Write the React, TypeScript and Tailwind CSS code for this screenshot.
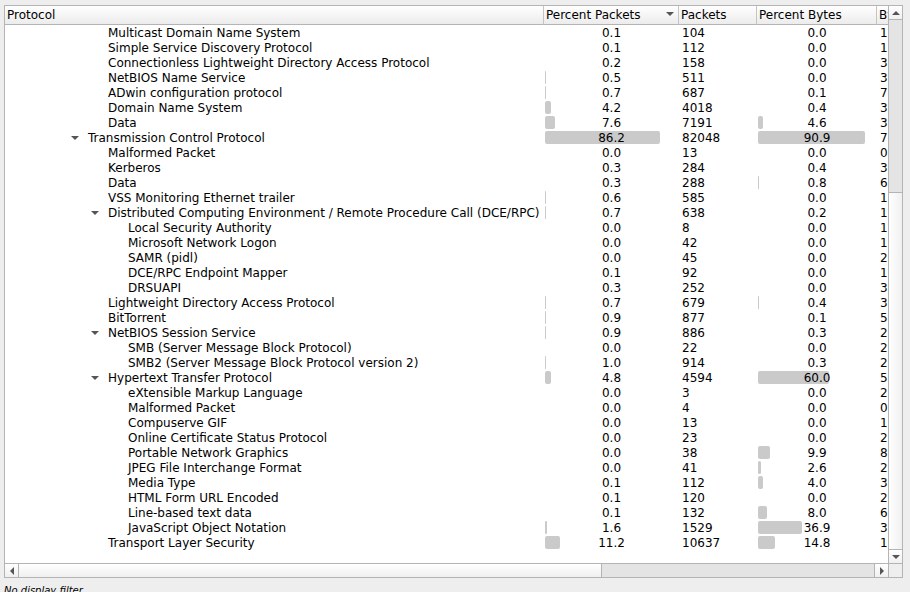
import React from "react";

type Row = {
  depth: number;
  open?: boolean;
  name: string;
  pctPackets: number;
  packets: number;
  pctBytes: number;
  bytes: string;
};

const r = (
  depth: number,
  name: string,
  pctPackets: number,
  packets: number,
  pctBytes: number,
  bytes: string,
  open = false,
): Row => ({ depth, name, pctPackets, packets, pctBytes, bytes, open });

const rows: Row[] = [
  r(1, "Multicast Domain Name System", 0.1, 104, 0, "1"),
  r(1, "Simple Service Discovery Protocol", 0.1, 112, 0, "1"),
  r(1, "Connectionless Lightweight Directory Access Protocol", 0.2, 158, 0, "3"),
  r(1, "NetBIOS Name Service", 0.5, 511, 0, "3"),
  r(1, "ADwin configuration protocol", 0.7, 687, 0.1, "7"),
  r(1, "Domain Name System", 4.2, 4018, 0.4, "3"),
  r(1, "Data", 7.6, 7191, 4.6, "3"),
  r(0, "Transmission Control Protocol", 86.2, 82048, 90.9, "7", true),
  r(1, "Malformed Packet", 0, 13, 0, "0"),
  r(1, "Kerberos", 0.3, 284, 0.4, "3"),
  r(1, "Data", 0.3, 288, 0.8, "6"),
  r(1, "VSS Monitoring Ethernet trailer", 0.6, 585, 0, "1"),
  r(1, "Distributed Computing Environment / Remote Procedure Call (DCE/RPC)", 0.7, 638, 0.2, "1", true),
  r(2, "Local Security Authority", 0, 8, 0, "1"),
  r(2, "Microsoft Network Logon", 0, 42, 0, "1"),
  r(2, "SAMR (pidl)", 0, 45, 0, "2"),
  r(2, "DCE/RPC Endpoint Mapper", 0.1, 92, 0, "1"),
  r(2, "DRSUAPI", 0.3, 252, 0, "3"),
  r(1, "Lightweight Directory Access Protocol", 0.7, 679, 0.44, "3"),
  r(1, "BitTorrent", 0.9, 877, 0.1, "5"),
  r(1, "NetBIOS Session Service", 0.9, 886, 0.3, "2", true),
  r(2, "SMB (Server Message Block Protocol)", 0, 22, 0, "2"),
  r(2, "SMB2 (Server Message Block Protocol version 2)", 1, 914, 0.3, "2"),
  r(1, "Hypertext Transfer Protocol", 4.8, 4594, 60, "5", true),
  r(2, "eXtensible Markup Language", 0, 3, 0, "2"),
  r(2, "Malformed Packet", 0, 4, 0, "0"),
  r(2, "Compuserve GIF", 0, 13, 0, "1"),
  r(2, "Online Certificate Status Protocol", 0, 23, 0, "2"),
  r(2, "Portable Network Graphics", 0, 38, 9.9, "8"),
  r(2, "JPEG File Interchange Format", 0, 41, 2.6, "2"),
  r(2, "Media Type", 0.1, 112, 4, "3"),
  r(2, "HTML Form URL Encoded", 0.1, 120, 0, "2"),
  r(2, "Line-based text data", 0.1, 132, 8, "6"),
  r(2, "JavaScript Object Notation", 1.6, 1529, 36.9, "3"),
  r(1, "Transport Layer Security", 11.2, 10637, 14.8, "1"),
];

const indents = ["pl-[66px]", "pl-[86px]", "pl-[106px]"];

const arrows = {
  up: "M0 4 L4 0 L8 4 Z",
  down: "M0 0 L8 0 L4 4 Z",
  left: "M4 0 L4 8 L0 4 Z",
  right: "M0 0 L4 4 L0 8 Z",
};

function Arrow({ dir }: { dir: keyof typeof arrows }) {
  const flat = dir === "up" || dir === "down";
  return (
    <svg
      className="block shrink-0"
      width={flat ? 8 : 4}
      height={flat ? 4 : 8}
      fill="#555555"
      aria-hidden="true"
    >
      <path d={arrows[dir]} />
    </svg>
  );
}

function PercentCell({ value, span }: { value: number; span: number }) {
  return (
    <td className="p-0">
      <div className="relative mx-px h-[15px] text-center">
        <div
          className="absolute top-px left-0 h-[13px] rounded-[2px] bg-[#cacaca]"
          style={{ width: Math.round((value * span) / 100) }}
        />
        <span className="relative">{value.toFixed(1)}</span>
      </div>
    </td>
  );
}

function Heading({ children, last = false }: { children: React.ReactNode; last?: boolean }) {
  return (
    <th
      scope="col"
      className={
        "overflow-hidden border-b border-[#b4b4b4] p-0 pl-[2px] text-left font-normal whitespace-nowrap " +
        (last ? "" : "border-r border-r-[#c4c4c4]")
      }
    >
      {children}
    </th>
  );
}

const button = "flex shrink-0 items-center justify-center bg-linear-to-b from-white to-[#f0f0f0]";

export default function App() {
  return (
    <main className="flex h-screen flex-col overflow-hidden bg-[#eeeeee] pt-[5px] pr-[7px] pl-1 font-['DejaVu_Sans',sans-serif] text-[12px] leading-[15px] text-black">
      <section className="flex min-h-0 flex-1 flex-col border border-[#b4b4b4]">
        <div className="flex min-h-0 flex-1">
          <div className="min-w-0 flex-1 overflow-hidden bg-white">
            <table className="w-full table-fixed border-separate border-spacing-0">
              <colgroup>
                <col />
                <col className="w-[135px]" />
                <col className="w-[78px]" />
                <col className="w-[120px]" />
                <col className="w-[11px]" />
              </colgroup>
              <thead>
                <tr className="h-[19px] bg-linear-to-b from-white to-[#ebebeb]">
                  <Heading>Protocol</Heading>
                  <Heading>
                    <button type="button" className="flex w-full justify-between pr-1">
                      Percent Packets
                      <span className="pt-1">
                        <Arrow dir="down" />
                      </span>
                    </button>
                  </Heading>
                  <Heading>Packets</Heading>
                  <Heading>Percent Bytes</Heading>
                  <Heading last>Bytes</Heading>
                </tr>
              </thead>
              <tbody className="leading-[17px]">
                {rows.map((row, i) => (
                  <tr key={i} className="h-[15px]">
                    <td className={"overflow-hidden p-0 whitespace-nowrap " + indents[row.depth]}>
                      <div className="flex h-[15px]">
                        <span className="w-[17px] shrink-0 self-center">
                          {row.open && (
                            <button type="button" aria-label={"Collapse " + row.name} className="block">
                              <Arrow dir="down" />
                            </button>
                          )}
                        </span>
                        {row.name}
                      </div>
                    </td>
                    <PercentCell value={row.pctPackets} span={133} />
                    <td className="p-0 pl-[3px]">
                      <div className="h-[15px]">{row.packets}</div>
                    </td>
                    <PercentCell value={row.pctBytes} span={118} />
                    <td className="overflow-hidden p-0 pl-[3px]">
                      <div className="h-[15px]">{row.bytes}</div>
                    </td>
                  </tr>
                ))}
              </tbody>
            </table>
          </div>
          <div className="flex w-[14px] shrink-0 flex-col border-l border-[#b4b4b4]">
            <button type="button" aria-label="Scroll up" className={button + " h-[14px] border-b border-[#b4b4b4]"}>
              <Arrow dir="up" />
            </button>
            <div className="shrink grow-[13] basis-0 bg-[#e4e4e4]" />
            <div className="shrink grow-[27] basis-0 border-t border-[#b4b4b4] bg-linear-to-r from-white to-[#f0f0f0]" />
            <button type="button" aria-label="Scroll down" className={button + " h-[14px] border-t border-[#b4b4b4]"}>
              <Arrow dir="down" />
            </button>
          </div>
        </div>
        <div className="flex h-[14px] shrink-0 border-t border-[#b4b4b4]">
          <button type="button" aria-label="Scroll left" className={button + " w-[14px] border-r border-[#b4b4b4]"}>
            <Arrow dir="left" />
          </button>
          <div className="shrink grow-[15] basis-0 border-r border-[#b4b4b4] bg-linear-to-b from-white to-[#f0f0f0]" />
          <div className="shrink grow-[7] basis-0 bg-[#e4e4e4]" />
          <button type="button" aria-label="Scroll right" className={button + " w-[14px] border-l border-[#b4b4b4]"}>
            <Arrow dir="right" />
          </button>
          <div className="w-[14px] shrink-0 border-l border-[#b4b4b4]" />
        </div>
      </section>
      <footer className="h-[14px] shrink-0 pt-[7px] text-[10px] leading-[12px] italic">No display filter.</footer>
    </main>
  );
}
